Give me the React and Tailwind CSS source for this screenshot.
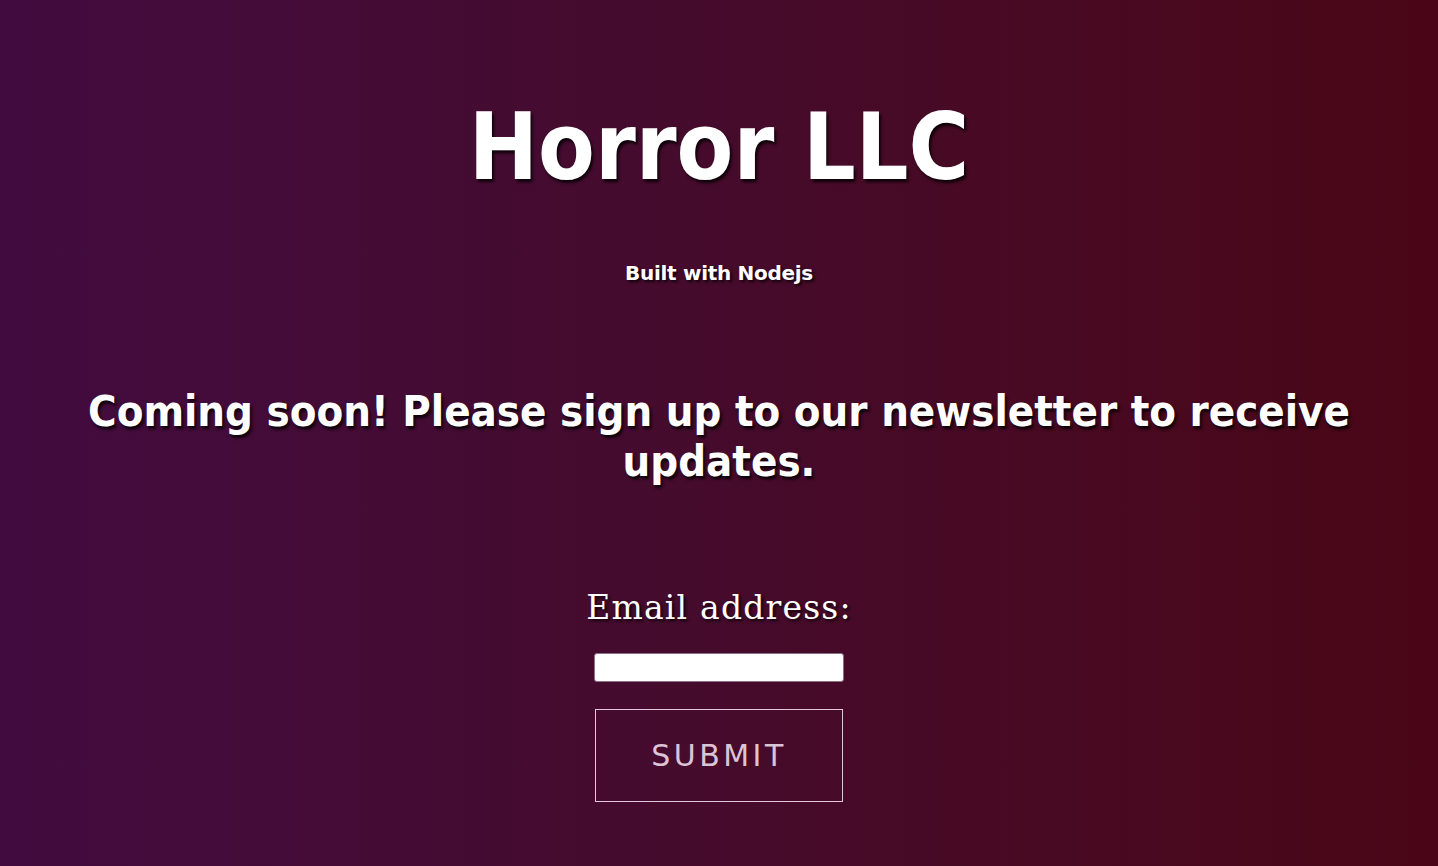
export default function App() {
  return (
    <div
      className="min-h-[866px] w-full flex flex-col items-center text-white bg-gradient-to-r from-[#420b3f] to-[#4a0616]"
      style={{ fontFamily: '"DejaVu Sans", sans-serif' }}
    >
      <h1
        className="mt-[92px] text-[92px] font-bold leading-[112px] [text-shadow:2px_3px_3px_rgba(0,0,0,0.8)]"
        style={{ fontFamily: '"DejaVu Sans Condensed", "DejaVu Sans", sans-serif' }}
      >
        Horror LLC
      </h1>
      <p className="mt-[54px] text-[20px] font-bold tracking-[-0.3px] [text-shadow:2px_2px_3px_rgba(0,0,0,0.8)]">
        Built with Nodejs
      </p>
      <h2
        className="mt-[98px] px-[40px] text-center text-[43.3px] leading-[50px] font-bold [text-shadow:2px_3px_3px_rgba(0,0,0,0.8)]"
        style={{ fontFamily: '"DejaVu Sans Condensed", "DejaVu Sans", sans-serif' }}
      >
        Coming soon! Please sign up to our newsletter to receive updates.
      </h2>
      <form className="mt-[97px] flex flex-col items-center">
        <label
          className="text-[33px] tracking-[1.2px] [text-shadow:2px_2px_3px_rgba(0,0,0,0.8)]"
          style={{ fontFamily: '"DejaVu Serif", serif' }}
        >
          Email address:
        </label>
        <input
          type="email"
          className="mt-[20px] w-[250px] h-[29px] bg-white rounded-[3px] border border-[#8a7088] outline-none"
        />
        <button
          type="button"
          className="mt-[27px] w-[248px] h-[93px] border border-[#e3c6dc] text-[#dcc4d6] text-[30px] tracking-[3.5px]"
        >
          SUBMIT
        </button>
      </form>
    </div>
  );
}
